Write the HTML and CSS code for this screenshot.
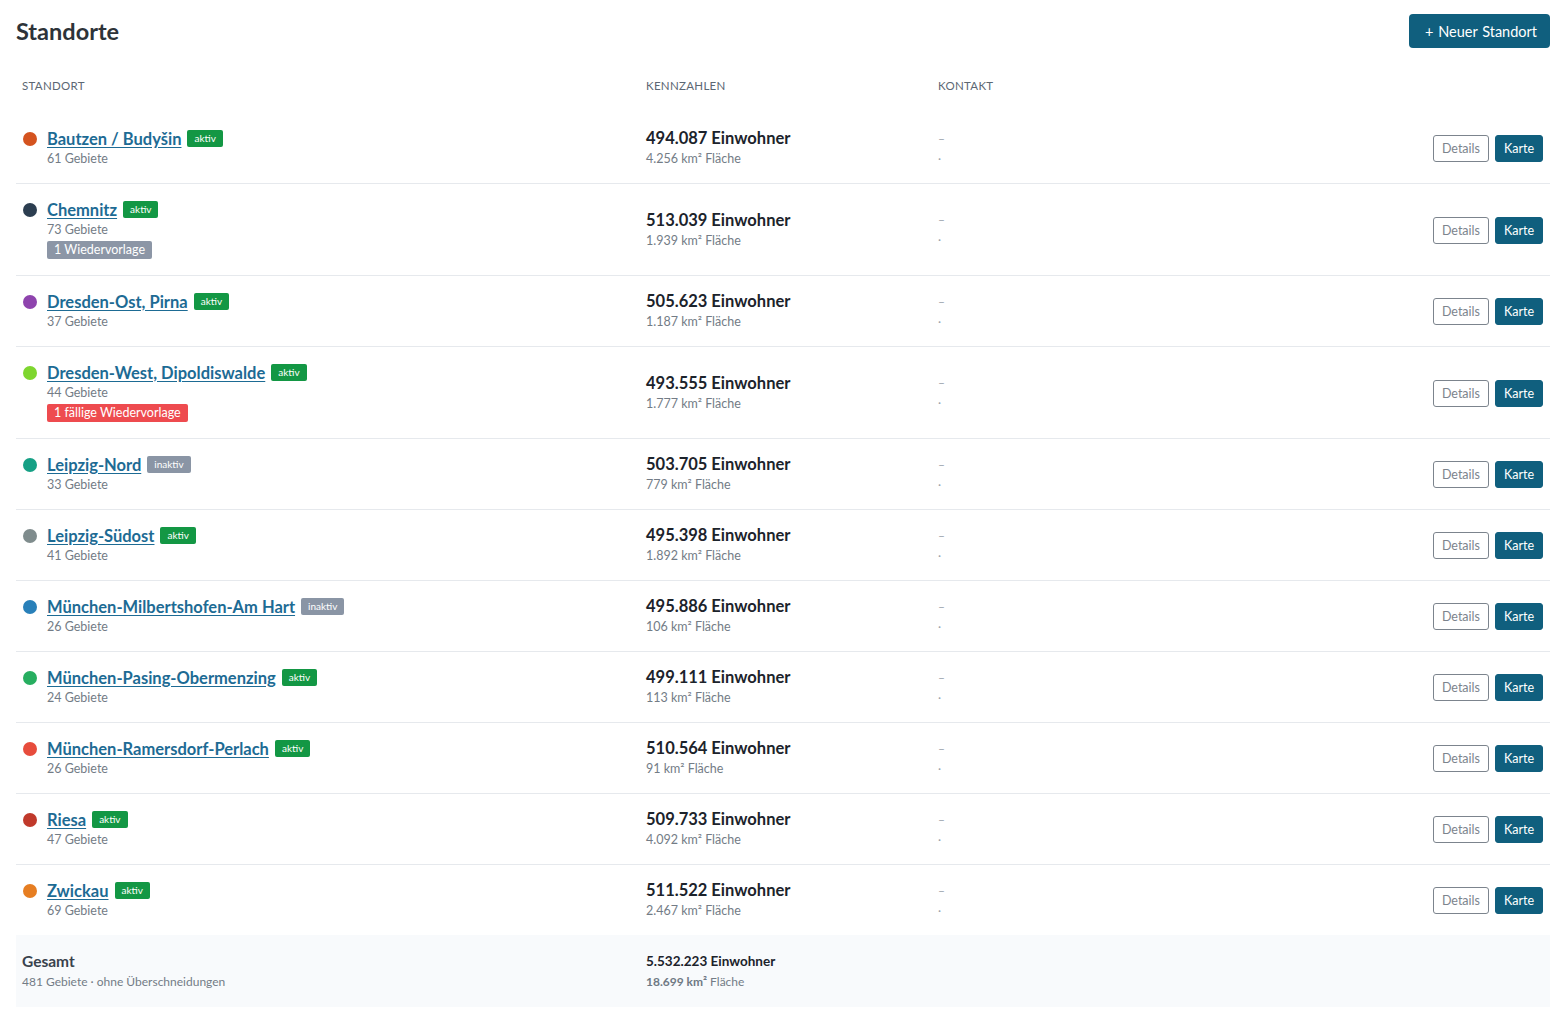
FILE: index.html
```html
<!DOCTYPE html>
<html lang="de">
<head>
    <meta charset="UTF-8">
    <title>Standorte</title>
    <link rel="stylesheet" href="styles.css">
</head>
<body>
<main class="page">
    <div class="topbar">
        <h1>Standorte</h1>
        <button class="btn-new">+ Neuer Standort</button>
    </div>

    <table class="sites">
        <colgroup>
            <col class="c-site">
            <col class="c-num">
            <col>
            <col class="c-act">
        </colgroup>
        <thead>
        <tr>
            <th>Standort</th>
            <th>Kennzahlen</th>
            <th>Kontakt</th>
            <th></th>
        </tr>
        </thead>
        <tbody>
        <tr>
            <td class="site">
                <div class="name-line"><span class="dot" style="background:#d4531f"></span><a href="#">Bautzen / Budyšin</a><span class="badge on">aktiv</span></div>
                <div class="sub">61 Gebiete</div>
            </td>
            <td><div class="big">494.087 Einwohner</div><div class="sub">4.256 km² Fläche</div></td>
            <td class="contact"><div>–</div><div>·</div></td>
            <td class="actions"><button class="btn-out">Details</button><button class="btn-fill">Karte</button></td>
        </tr>
        <tr>
            <td class="site">
                <div class="name-line"><span class="dot" style="background:#2c3e50"></span><a href="#">Chemnitz</a><span class="badge on">aktiv</span></div>
                <div class="sub">73 Gebiete</div>
                <div class="tag grey">1 Wiedervorlage</div>
            </td>
            <td><div class="big">513.039 Einwohner</div><div class="sub">1.939 km² Fläche</div></td>
            <td class="contact"><div>–</div><div>·</div></td>
            <td class="actions"><button class="btn-out">Details</button><button class="btn-fill">Karte</button></td>
        </tr>
        <tr>
            <td class="site">
                <div class="name-line"><span class="dot" style="background:#8e44ad"></span><a href="#">Dresden-Ost, Pirna</a><span class="badge on">aktiv</span></div>
                <div class="sub">37 Gebiete</div>
            </td>
            <td><div class="big">505.623 Einwohner</div><div class="sub">1.187 km² Fläche</div></td>
            <td class="contact"><div>–</div><div>·</div></td>
            <td class="actions"><button class="btn-out">Details</button><button class="btn-fill">Karte</button></td>
        </tr>
        <tr>
            <td class="site">
                <div class="name-line"><span class="dot" style="background:#7ed62f"></span><a href="#">Dresden-West, Dipoldiswalde</a><span class="badge on">aktiv</span></div>
                <div class="sub">44 Gebiete</div>
                <div class="tag red">1 fällige Wiedervorlage</div>
            </td>
            <td><div class="big">493.555 Einwohner</div><div class="sub">1.777 km² Fläche</div></td>
            <td class="contact"><div>–</div><div>·</div></td>
            <td class="actions"><button class="btn-out">Details</button><button class="btn-fill">Karte</button></td>
        </tr>
        <tr>
            <td class="site">
                <div class="name-line"><span class="dot" style="background:#16a085"></span><a href="#">Leipzig-Nord</a><span class="badge off">inaktiv</span></div>
                <div class="sub">33 Gebiete</div>
            </td>
            <td><div class="big">503.705 Einwohner</div><div class="sub">779 km² Fläche</div></td>
            <td class="contact"><div>–</div><div>·</div></td>
            <td class="actions"><button class="btn-out">Details</button><button class="btn-fill">Karte</button></td>
        </tr>
        <tr>
            <td class="site">
                <div class="name-line"><span class="dot" style="background:#7f8c8d"></span><a href="#">Leipzig-Südost</a><span class="badge on">aktiv</span></div>
                <div class="sub">41 Gebiete</div>
            </td>
            <td><div class="big">495.398 Einwohner</div><div class="sub">1.892 km² Fläche</div></td>
            <td class="contact"><div>–</div><div>·</div></td>
            <td class="actions"><button class="btn-out">Details</button><button class="btn-fill">Karte</button></td>
        </tr>
        <tr>
            <td class="site">
                <div class="name-line"><span class="dot" style="background:#2980b9"></span><a href="#">München-Milbertshofen-Am Hart</a><span class="badge off">inaktiv</span></div>
                <div class="sub">26 Gebiete</div>
            </td>
            <td><div class="big">495.886 Einwohner</div><div class="sub">106 km² Fläche</div></td>
            <td class="contact"><div>–</div><div>·</div></td>
            <td class="actions"><button class="btn-out">Details</button><button class="btn-fill">Karte</button></td>
        </tr>
        <tr>
            <td class="site">
                <div class="name-line"><span class="dot" style="background:#27ae60"></span><a href="#">München-Pasing-Obermenzing</a><span class="badge on">aktiv</span></div>
                <div class="sub">24 Gebiete</div>
            </td>
            <td><div class="big">499.111 Einwohner</div><div class="sub">113 km² Fläche</div></td>
            <td class="contact"><div>–</div><div>·</div></td>
            <td class="actions"><button class="btn-out">Details</button><button class="btn-fill">Karte</button></td>
        </tr>
        <tr>
            <td class="site">
                <div class="name-line"><span class="dot" style="background:#e74c3c"></span><a href="#">München-Ramersdorf-Perlach</a><span class="badge on">aktiv</span></div>
                <div class="sub">26 Gebiete</div>
            </td>
            <td><div class="big">510.564 Einwohner</div><div class="sub">91 km² Fläche</div></td>
            <td class="contact"><div>–</div><div>·</div></td>
            <td class="actions"><button class="btn-out">Details</button><button class="btn-fill">Karte</button></td>
        </tr>
        <tr>
            <td class="site">
                <div class="name-line"><span class="dot" style="background:#c0392b"></span><a href="#">Riesa</a><span class="badge on">aktiv</span></div>
                <div class="sub">47 Gebiete</div>
            </td>
            <td><div class="big">509.733 Einwohner</div><div class="sub">4.092 km² Fläche</div></td>
            <td class="contact"><div>–</div><div>·</div></td>
            <td class="actions"><button class="btn-out">Details</button><button class="btn-fill">Karte</button></td>
        </tr>
        <tr>
            <td class="site">
                <div class="name-line"><span class="dot" style="background:#e67e22"></span><a href="#">Zwickau</a><span class="badge on">aktiv</span></div>
                <div class="sub">69 Gebiete</div>
            </td>
            <td><div class="big">511.522 Einwohner</div><div class="sub">2.467 km² Fläche</div></td>
            <td class="contact"><div>–</div><div>·</div></td>
            <td class="actions"><button class="btn-out">Details</button><button class="btn-fill">Karte</button></td>
        </tr>
        </tbody>
        <tfoot>
        <tr>
            <td><div class="total-title">Gesamt</div><div class="sub">481 Gebiete · ohne Überschneidungen</div></td>
            <td><div class="total-num">5.532.223 Einwohner</div><div class="sub"><b>18.699 km²</b> Fläche</div></td>
            <td></td>
            <td></td>
        </tr>
        </tfoot>
    </table>
</main>
</body>
</html>
```

FILE: styles.css
```css
* {
    margin: 0;
    padding: 0;
    box-sizing: border-box;
}

body {
    font-family: Lato, "Open Sans", sans-serif;
    color: #1f2933;
    background: #ffffff;
}

.page {
    padding: 14px 18px 0 16px;
}

.topbar {
    display: flex;
    justify-content: space-between;
    align-items: center;
    height: 34px;
}

.topbar h1 {
    font-size: 23.5px;
    font-weight: 700;
    color: #2d3339;
}

.btn-new {
    height: 34px;
    padding: 0 13px 0 16px;
    border: 0;
    border-radius: 4px;
    background: #105f7e;
    color: #ffffff;
    font-family: inherit;
    font-size: 14.5px;
    word-spacing: 1px;
}

.sites {
    width: 100%;
    margin-top: 18px;
    border-collapse: collapse;
    table-layout: fixed;
}

.c-site {
    width: 624px;
}

.c-num {
    width: 292px;
}

.c-act {
    width: 140px;
}

.sites th {
    padding: 12px 6px 19px;
    text-align: left;
    font-size: 11.5px;
    line-height: 16px;
    font-weight: 400;
    letter-spacing: 0.3px;
    text-transform: uppercase;
    color: #5c6773;
}

.sites tbody td {
    padding: 15px 6px 14px;
    border-bottom: 1px solid #e6e9ed;
    vertical-align: middle;
}

.sites tbody tr:last-child td {
    border-bottom: 0;
}

.sites tbody td.actions {
    padding-right: 7px;
}

.name-line {
    display: flex;
    align-items: center;
    height: 21px;
}

.dot {
    width: 14px;
    height: 14px;
    border-radius: 50%;
    margin: 0 10px 0 1px;
    flex-shrink: 0;
}

.name-line a {
    font-size: 16.5px;
    font-weight: 700;
    color: #1d6b94;
    text-decoration: underline;
    text-underline-offset: 2px;
}

.site .sub,
.site .tag {
    margin-left: 25px;
}

.badge {
    margin-left: 6px;
    padding: 0 7px;
    height: 17px;
    line-height: 17px;
    border-radius: 2px;
    font-size: 10px;
    color: #ffffff;
}

.badge.on {
    background: #139744;
}

.badge.off {
    background: #8a95a5;
}

.sub {
    font-size: 12.5px;
    line-height: 20px;
    color: #737c86;
}

.tag {
    width: fit-content;
    margin-top: 1px;
    margin-bottom: 2px;
    padding: 0 7px;
    height: 18px;
    line-height: 18px;
    border-radius: 2px;
    font-size: 12.5px;
    color: #ffffff;
}

.tag.grey {
    background: #8c96a6;
}

.tag.red {
    background: #ee4b4f;
}

.big {
    font-size: 16.5px;
    font-weight: 700;
    line-height: 21px;
    color: #1c232b;
}

.contact {
    font-size: 12px;
    line-height: 20px;
    color: #9aa2ab;
}

.actions {
    text-align: right;
    white-space: nowrap;
}

.actions button {
    height: 27px;
    padding: 0 8px;
    border-radius: 3px;
    font-family: inherit;
    font-size: 12.5px;
    vertical-align: middle;
}

.btn-out {
    background: #ffffff;
    border: 1px solid #7c848d;
    color: #7c848d;
}

.btn-fill {
    margin-left: 6px;
    background: #105f7e;
    border: 1px solid #105f7e;
    color: #ffffff;
}

.sites tfoot td {
    padding: 16px 6px 14px;
    background: #f8fafc;
    vertical-align: middle;
}

.total-title {
    font-size: 15.5px;
    font-weight: 700;
    line-height: 20px;
    color: #39424d;
}

.total-num {
    font-size: 13.5px;
    font-weight: 700;
    line-height: 20px;
    color: #1c232b;
}

tfoot .sub {
    font-size: 12px;
    line-height: 22px;
}

tfoot .sub b {
    color: #6f7984;
}
```
